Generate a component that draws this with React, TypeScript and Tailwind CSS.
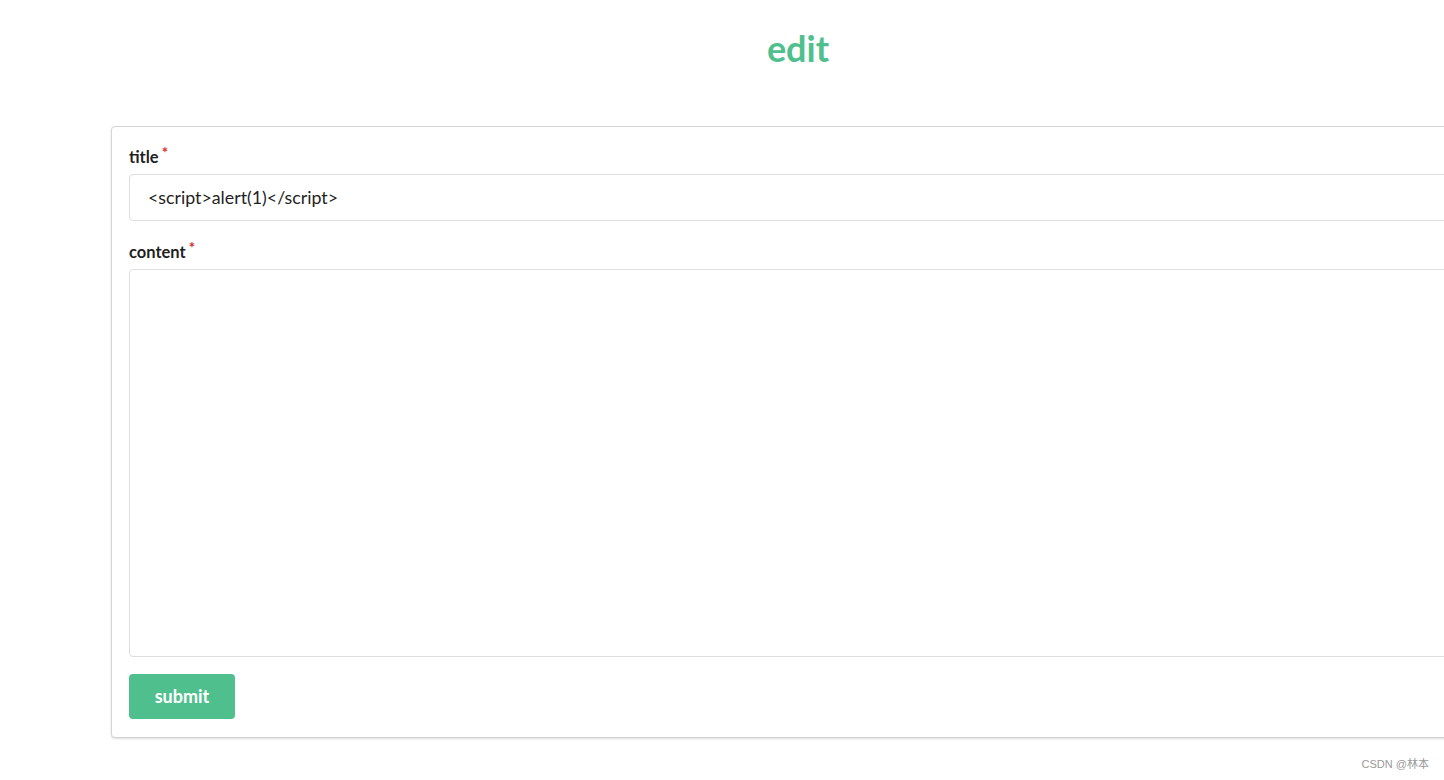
export default function App() {
  return (
    <div className="min-h-[780px] w-[1444px] overflow-hidden bg-white font-['Lato','Liberation_Sans',sans-serif] text-[#1f1f1f]">
      <div className="w-[1374px] ml-[111px]">
        <h1 className="pt-[23px] text-center text-[36px] font-bold leading-[50px] text-[#4fc08d]">edit</h1>
        <form className="mt-[53px] rounded-[4px] border border-[#d4d4d5] bg-white px-[17px] pt-[20px] pb-[18px] shadow-[0_1px_2px_0_rgba(34,36,38,0.15)]">
          <div>
            <label className="flex text-[16.5px] font-bold leading-[20px] text-[#1f1f1f]">
              title<span className="ml-[3px] -mt-[5px] text-[15px] text-[#db2828]">*</span>
            </label>
            <div className="mt-[7px] h-[47px] rounded-[4px] border border-[#dededf] px-[18px] flex items-center text-[17.8px] text-[#1f1f1f]">
              {"<script>alert(1)</script>"}
            </div>
          </div>
          <div className="mt-[21px]">
            <label className="flex text-[16.5px] font-bold leading-[20px] text-[#1f1f1f]">
              content<span className="ml-[3px] -mt-[5px] text-[15px] text-[#db2828]">*</span>
            </label>
            <div className="mt-[7px] h-[388px] rounded-[4px] border border-[#dededf]" />
          </div>
          <button type="button" className="mt-[17px] h-[45px] w-[106px] rounded-[4px] bg-[#4fc08d] text-[18px] font-bold text-white">
            submit
          </button>
        </form>
      </div>
      <div className="mt-[18px] pr-[15px] text-right text-[11px] text-[#999] font-['Liberation_Sans','Noto_Sans_CJK_SC',sans-serif]">
        CSDN @林本
      </div>
    </div>
  );
}
